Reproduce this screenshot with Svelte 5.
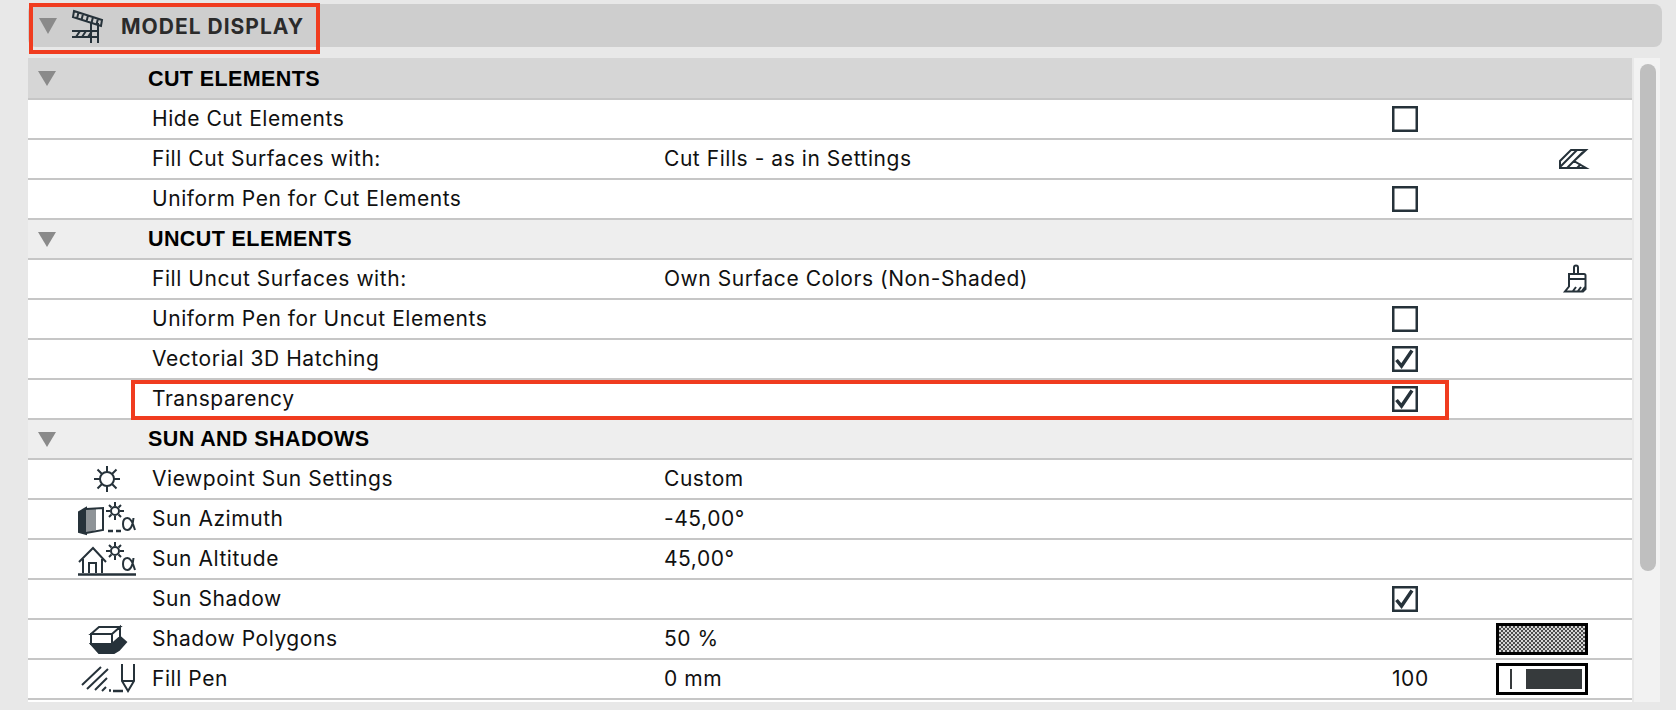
<script lang="ts">
  type Row = {
    kind: "section" | "row";
    label: string;
    value?: string;
    check?: boolean;
    num?: string;
    icon?: string;
    extra?: string;
    light?: boolean;
  };

  const rows: Row[] = [
    { kind: "section", label: "CUT ELEMENTS" },
    { kind: "row", label: "Hide Cut Elements", check: false },
    { kind: "row", label: "Fill Cut Surfaces with:", value: "Cut Fills - as in Settings", extra: "cutfill" },
    { kind: "row", label: "Uniform Pen for Cut Elements", check: false },
    { kind: "section", label: "UNCUT ELEMENTS", light: true },
    { kind: "row", label: "Fill Uncut Surfaces with:", value: "Own Surface Colors (Non-Shaded)", extra: "brush" },
    { kind: "row", label: "Uniform Pen for Uncut Elements", check: false },
    { kind: "row", label: "Vectorial 3D Hatching", check: true },
    { kind: "row", label: "Transparency", check: true },
    { kind: "section", label: "SUN AND SHADOWS", light: true },
    { kind: "row", label: "Viewpoint Sun Settings", value: "Custom", icon: "sun" },
    { kind: "row", label: "Sun Azimuth", value: "-45,00°", icon: "azimuth" },
    { kind: "row", label: "Sun Altitude", value: "45,00°", icon: "altitude" },
    { kind: "row", label: "Sun Shadow", check: true },
    { kind: "row", label: "Shadow Polygons", value: "50 %", icon: "shadow", extra: "pattern" },
    { kind: "row", label: "Fill Pen", value: "0 mm", icon: "pen", num: "100", extra: "penbox" },
  ];
</script>

{#snippet small_sun(cx: number, cy: number)}
  <circle {cx} {cy} r="4" />
  <path d="M{cx} {cy - 5}v-4M{cx} {cy + 5}v4M{cx - 5} {cy}h-4M{cx + 5} {cy}h4M{cx - 3.500} {cy - 3.500}l-2.500 -2.500M{cx + 3.500} {cy - 3.500}l2.500 -2.500M{cx - 3.500} {cy + 3.500}l-2.500 2.500M{cx + 3.500} {cy + 3.500}l2.500 2.500" />
{/snippet}

{#snippet alpha(x: number, y: number)}
  <path d="M{x + 11.500} {y}C{x + 11} {y + 8} {x + 8} {y + 12} {x + 5.500} {y + 12}C{x + 2} {y + 12} {x + 1} {y + 9} {x + 1} {y + 6}C{x + 1} {y + 3} {x + 2} {y} {x + 5.500} {y}C{x + 9} {y} {x + 11} {y + 5} {x + 13} {y + 12}" />
{/snippet}

{#snippet icon(name: string)}
  {#if name === "sun"}
    <svg class="Icon Icon--sun" width="26" height="26" viewBox="0 0 26 26">
      <circle cx="13" cy="13" r="7" />
      <path d="M13 6V0M13 20v6M6 13H0M20 13h6M8 8L3.500 3.500M18 8l4.500 -4.500M8 18l-4.500 4.500M18 18l4.500 4.500" />
    </svg>
  {:else if name === "azimuth"}
    <svg class="Icon" width="59" height="34" viewBox="0 0 59 34">
      <path class="Icon__solid" d="M1 10l7 -4v26l-7 -2z" />
      <path class="Icon__mid" d="M8 7l10 -1v22l-10 3z" />
      <path d="M8 7l17 -1v22l-17 3" />
      {@render small_sun(37, 9)}
      <path class="Icon__thick" d="M30 29h5M38 29h5" />
      {@render alpha(44, 16)}
    </svg>
  {:else if name === "altitude"}
    <svg class="Icon" width="59" height="34" viewBox="0 0 59 34">
      <path d="M1 20L15 6l13 14M5 17v14M24 17v14M11 31V21h7v10" />
      <path class="Icon__thick" d="M0 32.500h58" />
      {@render small_sun(37, 9)}
      {@render alpha(44, 16)}
    </svg>
  {:else if name === "shadow"}
    <svg class="Icon Icon--shadow" width="38" height="28" viewBox="0 0 38 28">
      <path class="Icon__solid" d="M1 19h21l7 -8l7 6l-7 8l-5 3H9z" />
      <path class="Icon__fillwhite" d="M1 9h21v10H1zM1 9l8 -7h21l-8 7zM22 9l8 -7v10l-8 7z" />
      <path d="M1 9h21v10H1zM1 9l8 -7h21l-8 7zM22 9l8 -7v10l-8 7z" />
    </svg>
  {:else if name === "pen"}
    <svg class="Icon" width="56" height="30" viewBox="0 0 56 30">
      <path d="M1 21L20 3M6 25L27 5M14 26L26 14M21 27l4 -4" />
      <path class="Icon__thick" d="M28 26.500h2M32 27h10" />
      <path d="M41 0v17l6 10l6 -10V0M41 17h12" />
    </svg>
  {/if}
{/snippet}

<main class="Page">
  <header class="Head">
    <svg class="Head__tri" width="18" height="16" viewBox="0 0 18 16"><path d="M0 0h18L9 16z" /></svg>
    <svg class="Icon Head__icon" width="32" height="34" viewBox="0 0 32 34">
      <path d="M2 2l28 9l-1 6L1 8zM6.500 3.500L5 9.500M11 5l-1.500 6M16 6.500l-1.500 6M21 8l-1.500 6M26 9.500l-1.500 6" />
      <path d="M0 22h26M0 28h26M4 28l4 -6M10 28l4 -6M16 28l4 -6" />
      <path d="M19 14v20M26 14v20" />
    </svg>
    <span class="Head__title">MODEL DISPLAY</span>
  </header>

  <div class="Body">
    <section class="Table">
      {#each rows as row, i}
        {#if row.kind === "section"}
          <div class="Row Row--section" class:Row--light={row.light} class:Row--first={i === 0}>
            <div class="Row__lead">
              <svg class="Row__tri" width="18" height="15" viewBox="0 0 18 15"><path d="M0 0h18L9 15z" /></svg>
            </div>
            <div class="Row__title">{row.label}</div>
          </div>
        {:else}
          <div class="Row">
            <div class="Row__icon">
              {#if row.icon}{@render icon(row.icon)}{/if}
            </div>
            <div class="Row__label">{row.label}</div>
            <div class="Row__value">{row.value ?? ""}</div>
            <div class="Row__check">
              {#if row.num}
                <span class="Row__num">{row.num}</span>
              {:else if row.check !== undefined}
                <span class="Check">
                  {#if row.check}
                    <svg width="22" height="22" viewBox="0 0 22 22"><path d="M2.500 12l5 6L18 2.500" /></svg>
                  {/if}
                </span>
              {/if}
            </div>
            <div class="Row__extra">
              {#if row.extra === "cutfill"}
                <svg class="Icon Icon--cutfill" width="28" height="20" viewBox="0 0 28 20">
                  <path d="M1 19V12L12 1h15L15 12l12 7zM1 19h26M1 18L18 1M8 19L24 3M18 19l4 -4" />
                </svg>
              {:else if row.extra === "brush"}
                <svg class="Icon" width="24" height="28" viewBox="0 0 24 28">
                  <path d="M10 9V2.500a2 2 0 0 1 4 0V9M5 9h15a1.500 1.500 0 0 1 1.500 1.500V24l-2.500 2.500H1l4 -5zM5 14h16M9 26l3 -4M14 26l3 -4M18 26l3 -4" />
                </svg>
              {:else if row.extra === "pattern"}
                <span class="Swatch Swatch--pattern"></span>
              {:else if row.extra === "penbox"}
                <span class="Swatch Swatch--pen">
                  <span class="Swatch__tick"></span>
                  <span class="Swatch__bar"></span>
                </span>
              {/if}
            </div>
          </div>
        {/if}
      {/each}
    </section>
    <aside class="Scroll"><div class="Scroll__thumb"></div></aside>
  </div>

  <div class="Mark Mark--head"></div>
  <div class="Mark Mark--row"></div>
</main>

<style>
  :global(body) {
    background: #e8e8e8;
    overflow: hidden;
  }

  .Page {
    position: relative;
    width: 1676px;
    height: 710px;
    padding: 4px 14px 0 28px;
    box-sizing: border-box;
    font-family: Inter, "Liberation Sans", sans-serif;
    color: #111;
  }

  .Head {
    display: flex;
    align-items: center;
    height: 43px;
    border-radius: 8px;
    background: #cecece;
  }

  .Head__tri {
    margin-left: 11px;
    fill: #8a8a8a;
  }

  .Head__icon {
    margin-left: 15px;
  }

  .Head__title {
    margin-left: 17px;
    padding-top: 2px;
    font-size: 21px;
    font-weight: 700;
    letter-spacing: 1px;
    color: #2b2b2b;
  }

  .Body {
    display: flex;
    margin-top: 11px;
    height: 644px;
  }

  .Table {
    width: 1604px;
    background: #fff;
  }

  .Row {
    display: grid;
    grid-template-columns: 124px 512px 728px 96px 1fr;
    align-items: center;
    height: 40px;
    box-sizing: border-box;
    border-bottom: 2px solid #c6c6c6;
    font-size: 21px;
  }

  .Row--section {
    grid-template-columns: 120px 1fr;
    background: #d6d6d6;
  }

  .Row--first {
    height: 42px;
  }

  .Row--first .Row__title {
    padding-top: 2px;
  }

  .Row--light {
    background: #eeeeee;
  }

  .Row__lead {
    display: flex;
    padding-left: 10px;
  }

  .Row__tri {
    fill: #8a8a8a;
  }

  .Row__title {
    font-family: "Liberation Sans", Arial, sans-serif;
    font-size: 21.500px;
    font-weight: 700;
    letter-spacing: 0.4px;
    color: #000;
  }

  .Row__icon {
    display: flex;
    justify-content: flex-end;
    align-items: center;
    padding-right: 15px;
    height: 38px;
  }

  .Row__label,
  .Row__value,
  .Row__num {
    padding-bottom: 2px;
    white-space: nowrap;
    letter-spacing: 0.55px;
  }

  .Row__check {
    display: flex;
    align-items: center;
  }

  .Check {
    display: flex;
    width: 26px;
    height: 26px;
    padding: 2px;
    box-sizing: border-box;
    box-shadow: inset 0 0 0 2.500px #26323a;
    background: #fff;
  }

  .Check svg {
    fill: none;
    stroke: #26323a;
    stroke-width: 3.500;
  }

  .Row__extra {
    display: flex;
    justify-content: flex-end;
    align-items: center;
    padding-right: 44px;
  }

  .Icon {
    fill: none;
    stroke: #26323a;
    stroke-width: 2;
    overflow: visible;
  }

  .Icon--sun {
    margin-right: 17px;
  }

  .Icon--shadow {
    margin-right: 9px;
  }

  .Icon--cutfill {
    margin-right: 1px;
  }

  .Icon__solid {
    fill: #26323a;
  }

  .Icon__mid {
    fill: #8e9397;
    stroke: none;
  }

  .Icon__fillwhite {
    fill: #fff;
    stroke: none;
  }

  .Icon__thick {
    stroke-width: 2.500;
  }

  .Swatch {
    display: flex;
    align-items: stretch;
    width: 92px;
    height: 32px;
    box-sizing: border-box;
    border: 3px solid #000;
  }

  .Swatch--pattern {
    background: repeating-conic-gradient(#4a4a4a 0 25%, #d4d4d4 0 50%) 0 0 / 4px 4px;
  }

  .Swatch--pen {
    padding: 3px 3px 3px 11px;
    background: #fff;
  }

  .Swatch__tick {
    width: 2px;
    background: #363a3c;
  }

  .Swatch__bar {
    flex: 1;
    margin-left: 14px;
    background: #363a3c;
  }

  .Scroll {
    width: 26px;
    margin-left: 2px;
    padding: 6px 4px 0 6px;
    box-sizing: border-box;
    background: #f2f2f2;
  }

  .Scroll__thumb {
    height: 507px;
    border-radius: 8px;
    background: #bfbfbf;
  }

  .Mark {
    position: absolute;
    box-sizing: border-box;
    border: 4px solid #f03c1f;
  }

  .Mark--head {
    left: 29px;
    top: 3px;
    width: 291px;
    height: 51px;
  }

  .Mark--row {
    left: 131px;
    top: 380px;
    width: 1318px;
    height: 40px;
  }
</style>
